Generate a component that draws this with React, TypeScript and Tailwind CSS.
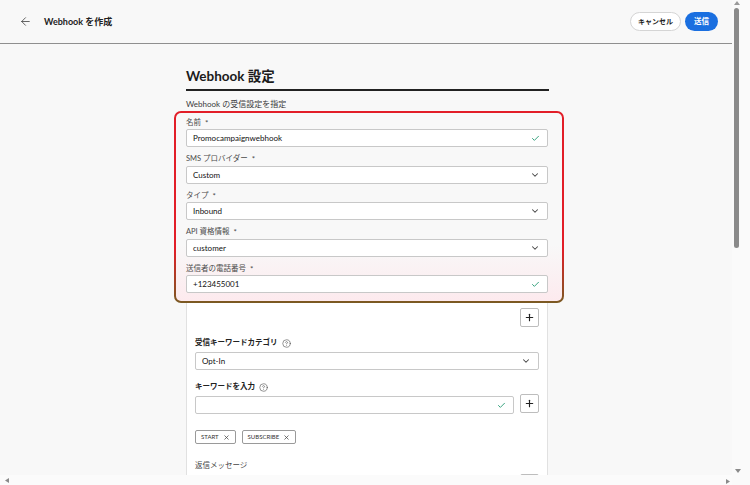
import { ArrowLeft, Check, ChevronDown, CircleHelp, Plus, X } from 'lucide-react';

const font = { fontFamily: 'Lato, "Noto Sans CJK JP", sans-serif' };

function Field({ label, value, kind }: { label: string; value: string; kind: 'check' | 'select' }) {
  return (
    <div className="flex flex-col">
      <div className="h-[13px] flex items-center gap-[4px] text-[7.5px] text-[#4b4b4b] leading-none">
        <span>{label}</span>
        <span className="text-[8px]">*</span>
      </div>
      <div className="h-[18px] flex items-center justify-between bg-white border border-[#c8c8c8] rounded-[2px] pl-[6px] pr-[7px]">
        <span className="text-[8px] text-[#111] leading-none">{value}</span>
        {kind === 'check' ? (
          <Check size={9} strokeWidth={2.5} className="text-[#2d9d78]" />
        ) : (
          <ChevronDown size={10} strokeWidth={2.5} className="text-[#444]" />
        )}
      </div>
    </div>
  );
}

function SquareButton() {
  return (
    <div className="w-[19px] h-[19px] shrink-0 flex items-center justify-center bg-white border border-[#bdbdbd] rounded-[2px]">
      <Plus size={11} strokeWidth={2.5} className="text-[#222]" />
    </div>
  );
}

function Tag({ text }: { text: string }) {
  return (
    <div className="h-[14px] flex items-center gap-[4px] px-[5px] bg-white border border-[#9a9a9a] rounded-[2px]">
      <span className="text-[6px] text-[#333] leading-none">{text}</span>
      <X size={7} strokeWidth={2.5} className="text-[#444]" />
    </div>
  );
}

export default function App() {
  return (
    <div className="w-[750px] h-[485px] flex bg-[#f8f8f8] overflow-hidden" style={font}>
      {/* main column */}
      <div className="w-[732px] flex flex-col">
        <header className="h-[44px] shrink-0 flex items-center border-b border-[#8f8f8f] pl-[19px] pr-[14px]">
          <ArrowLeft size={13} strokeWidth={1.5} className="text-[#444]" />
          <h1 className="ml-[12px] text-[9px] font-bold text-[#222]">Webhook を作成</h1>
          <div className="ml-auto flex items-center gap-[4px]">
            <button className="h-[19px] px-[7px] rounded-full border-[1.5px] border-[#d5d5d5] bg-white text-[7px] font-bold text-[#222]">
              キャンセル
            </button>
            <button className="h-[19px] px-[9px] rounded-full bg-[#1a6fe0] text-[7.5px] font-bold text-white">
              送信
            </button>
          </div>
        </header>

        <div className="flex-1 overflow-hidden">
          <div className="ml-[174px] w-[390px] pt-[22px] flex flex-col">
            <div className="ml-[12px] mr-[15px]">
              <h2 className="text-[13.5px] font-bold text-[#1b1b1b] leading-[20px]">Webhook 設定</h2>
              <div className="mt-[3px] h-[2px] bg-[#222]" />
              <p className="mt-[7px] text-[8px] text-[#3a3a3a] leading-[12px]">Webhook の受信設定を指定</p>
            </div>

            {/* highlight */}
            <div className="mt-[1px] p-[2px] rounded-[7px] bg-[linear-gradient(to_bottom,#e21e28_72%,#7a5a22)]">
              <div className="rounded-[5px] bg-[linear-gradient(to_bottom,#f8f8f8_70%,#fdeaee)] pt-[3px] pb-[8px] pl-[10px] pr-[14px] flex flex-col gap-[5.5px]">
                <Field label="名前" value="Promocampaignwebhook" kind="check" />
                <Field label="SMS プロバイダー" value="Custom" kind="select" />
                <Field label="タイプ" value="Inbound" kind="select" />
                <Field label="API 資格情報" value="customer" kind="select" />
                <Field label="送信者の電話番号" value="+123455001" kind="check" />
              </div>
            </div>

            {/* card */}
            <div className="ml-[12px] mr-[16px] h-[200px] bg-white border-x border-[#e1e1e1] px-[8px] pt-[5px] flex flex-col">
              <div className="flex justify-end">
                <SquareButton />
              </div>
              <div className="mt-[10px] h-[12px] flex items-center gap-[4px]">
                <span className="text-[7.5px] font-bold text-[#222] leading-none">受信キーワードカテゴリ</span>
                <CircleHelp size={9} strokeWidth={1.5} className="text-[#444]" />
              </div>
              <div className="mt-[3px] h-[18px] flex items-center justify-between border border-[#c8c8c8] rounded-[2px] pl-[6px] pr-[7px]">
                <span className="text-[8px] text-[#111] leading-none">Opt-In</span>
                <ChevronDown size={10} strokeWidth={2.5} className="text-[#444]" />
              </div>
              <div className="mt-[11px] h-[12px] flex items-center gap-[4px]">
                <span className="text-[7.5px] font-bold text-[#222] leading-none">キーワードを入力</span>
                <CircleHelp size={9} strokeWidth={1.5} className="text-[#444]" />
              </div>
              <div className="flex items-center gap-[6px]">
                <div className="flex-1 mt-[3px] h-[18px] flex items-center justify-end border border-[#c8c8c8] rounded-[2px] pr-[7px]">
                  <Check size={9} strokeWidth={2.5} className="text-[#2d9d78]" />
                </div>
                <SquareButton />
              </div>
              <div className="mt-[16px] flex items-center gap-[6px]">
                <Tag text="START" />
                <Tag text="SUBSCRIBE" />
              </div>
              <div className="mt-[16px] h-[12px] flex items-center">
                <span className="text-[7.5px] text-[#444] leading-none">返信メッセージ</span>
              </div>
              <div className="mt-[2px] flex items-center gap-[6px]">
                <div className="flex-1 h-[18px] border border-[#c8c8c8] rounded-[2px]" />
                <SquareButton />
              </div>
            </div>
          </div>
        </div>

        {/* horizontal scrollbar */}
        <div className="h-[10px] shrink-0 bg-[#fbfbfb] flex items-center justify-between pl-[5px] pr-[2px]">
          <svg width="4" height="5" viewBox="0 0 4 5"><path d="M4 0 L0 2.5 L4 5 Z" fill="#8a8a8a" /></svg>
          <svg width="4" height="5" viewBox="0 0 4 5" className="mt-[3px]"><path d="M0 0 L4 2.5 L0 5 Z" fill="#8a8a8a" /></svg>
        </div>
      </div>

      {/* vertical scrollbar */}
      <div className="w-[18px] flex flex-col items-start pl-[2px] pt-[1px] pb-[12px] bg-[#fafafa]">
        <svg width="6" height="4" viewBox="0 0 6 4"><path d="M0 4 L3 0 L6 4 Z" fill="#9a9a9a" /></svg>
        <div className="mt-[3px] w-[5px] h-[240px] rounded-full bg-[#8a8a8a]" />
        <div className="flex-1" />
        <svg width="6" height="4" viewBox="0 0 6 4" className="ml-[1px]"><path d="M0 0 L6 0 L3 4 Z" fill="#8a8a8a" /></svg>
      </div>
    </div>
  );
}
